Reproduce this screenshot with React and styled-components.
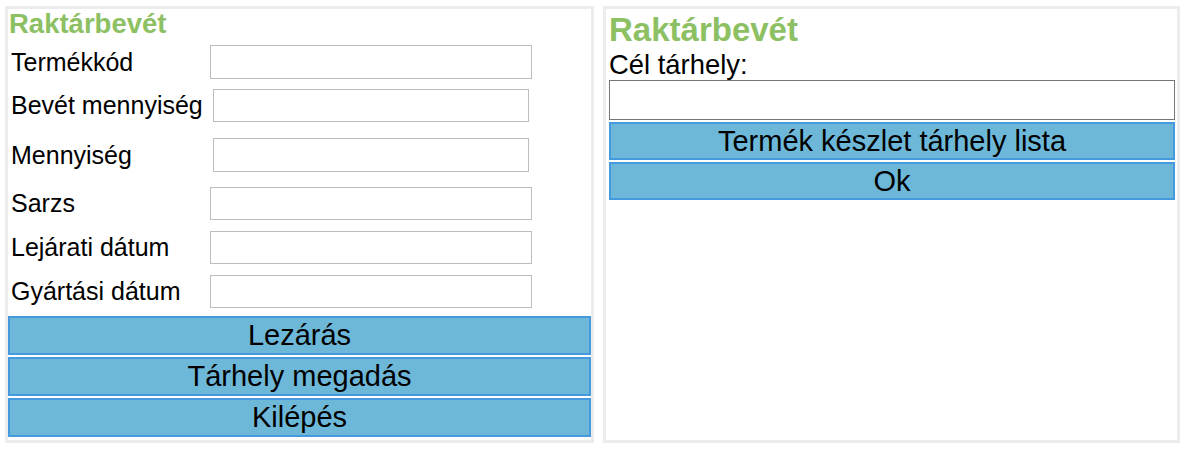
import React from 'react'
import styled, { createGlobalStyle } from 'styled-components'

const GlobalStyle = createGlobalStyle`
  body {
    margin: 0;
    background: #fff;
    font-family: 'Liberation Sans', Arial, sans-serif;
  }
`

const Page = styled.div`
  display: flex;
  gap: 9px;
  padding: 6px 0 0 5px;
`

const Panel = styled.div`
  box-sizing: border-box;
  display: flex;
  flex-direction: column;
  width: ${p => p.w}px;
  height: 437px;
  border: 3px solid #ececec;
  padding: ${p => p.pad || '0'};
  background: #fff;
`

const Title = styled.h1`
  margin: 0;
  color: #8cc063;
  font-weight: bold;
  font-size: ${p => p.size}px;
  line-height: ${p => p.lh}px;
  margin-top: ${p => p.mt || 0}px;
  padding-left: ${p => p.pl || 0}px;
  white-space: nowrap;
`

const FormRow = styled.div`
  display: flex;
  align-items: center;
  height: ${p => p.h}px;
  padding-left: 3px;
`

const Label = styled.label`
  width: ${p => p.lw}px;
  font-size: 25px;
  color: #000;
  white-space: nowrap;
`

const TextInput = styled.input`
  box-sizing: border-box;
  width: ${p => p.w}px;
  height: ${p => p.h}px;
  border: 1px solid #bdbdbd;
  margin: 0;
  padding: 0 4px;
  font-size: 18px;
  outline: none;
`

const WideInput = styled.input`
  box-sizing: border-box;
  width: 100%;
  height: 40px;
  margin: 0 0 2px;
  border: 1px solid #767676;
  padding: 0 4px;
  font-size: 20px;
  outline: none;
`

const Buttons = styled.div`
  display: flex;
  flex-direction: column;
  gap: 2px;
  margin-top: ${p => p.mt || 0}px;
`

const Button = styled.button`
  box-sizing: border-box;
  width: 100%;
  height: ${p => p.h}px;
  margin: 0;
  padding: 0;
  border: 2px solid #4799de;
  background: #6db8d8;
  color: #000;
  font-family: 'Liberation Sans', Arial, sans-serif;
  font-size: 29px;
  line-height: 1;
  white-space: nowrap;
  cursor: pointer;
`

const FieldLabel = styled.div`
  font-size: 27.4px;
  line-height: 31px;
  color: #000;
  white-space: nowrap;
`

const fields = [
  { label: 'Termékkód', rowH: 46, left: 199, w: 322, h: 34 },
  { label: 'Bevét mennyiség', rowH: 41, left: 202, w: 316, h: 33 },
  { label: 'Mennyiség', rowH: 58, left: 202, w: 316, h: 34 },
  { label: 'Sarzs', rowH: 39, left: 199, w: 322, h: 33 },
  { label: 'Lejárati dátum', rowH: 49, left: 199, w: 322, h: 33 },
  { label: 'Gyártási dátum', rowH: 39, left: 199, w: 322, h: 33 }
]

const App = () => {
  return (
    <>
      <GlobalStyle />
      <Page>
        <Panel w={589}>
          <Title size={27.5} lh={30} pl={1}>Raktárbevét</Title>
          {fields.map(f => (
            <FormRow key={f.label} h={f.rowH}>
              <Label lw={f.left}>{f.label}</Label>
              <TextInput w={f.w} h={f.h} />
            </FormRow>
          ))}
          <Buttons mt={5}>
            <Button h={39}>Lezárás</Button>
            <Button h={39}>Tárhely megadás</Button>
            <Button h={39}>Kilépés</Button>
          </Buttons>
        </Panel>
        <Panel w={577} pad="0 2px 0 3px">
          <Title size={33} lh={38} mt={2}>Raktárbevét</Title>
          <FieldLabel>Cél tárhely:</FieldLabel>
          <WideInput />
          <Buttons>
            <Button h={38}>Termék készlet tárhely lista</Button>
            <Button h={38}>Ok</Button>
          </Buttons>
        </Panel>
      </Page>
    </>
  )
}

export default App
